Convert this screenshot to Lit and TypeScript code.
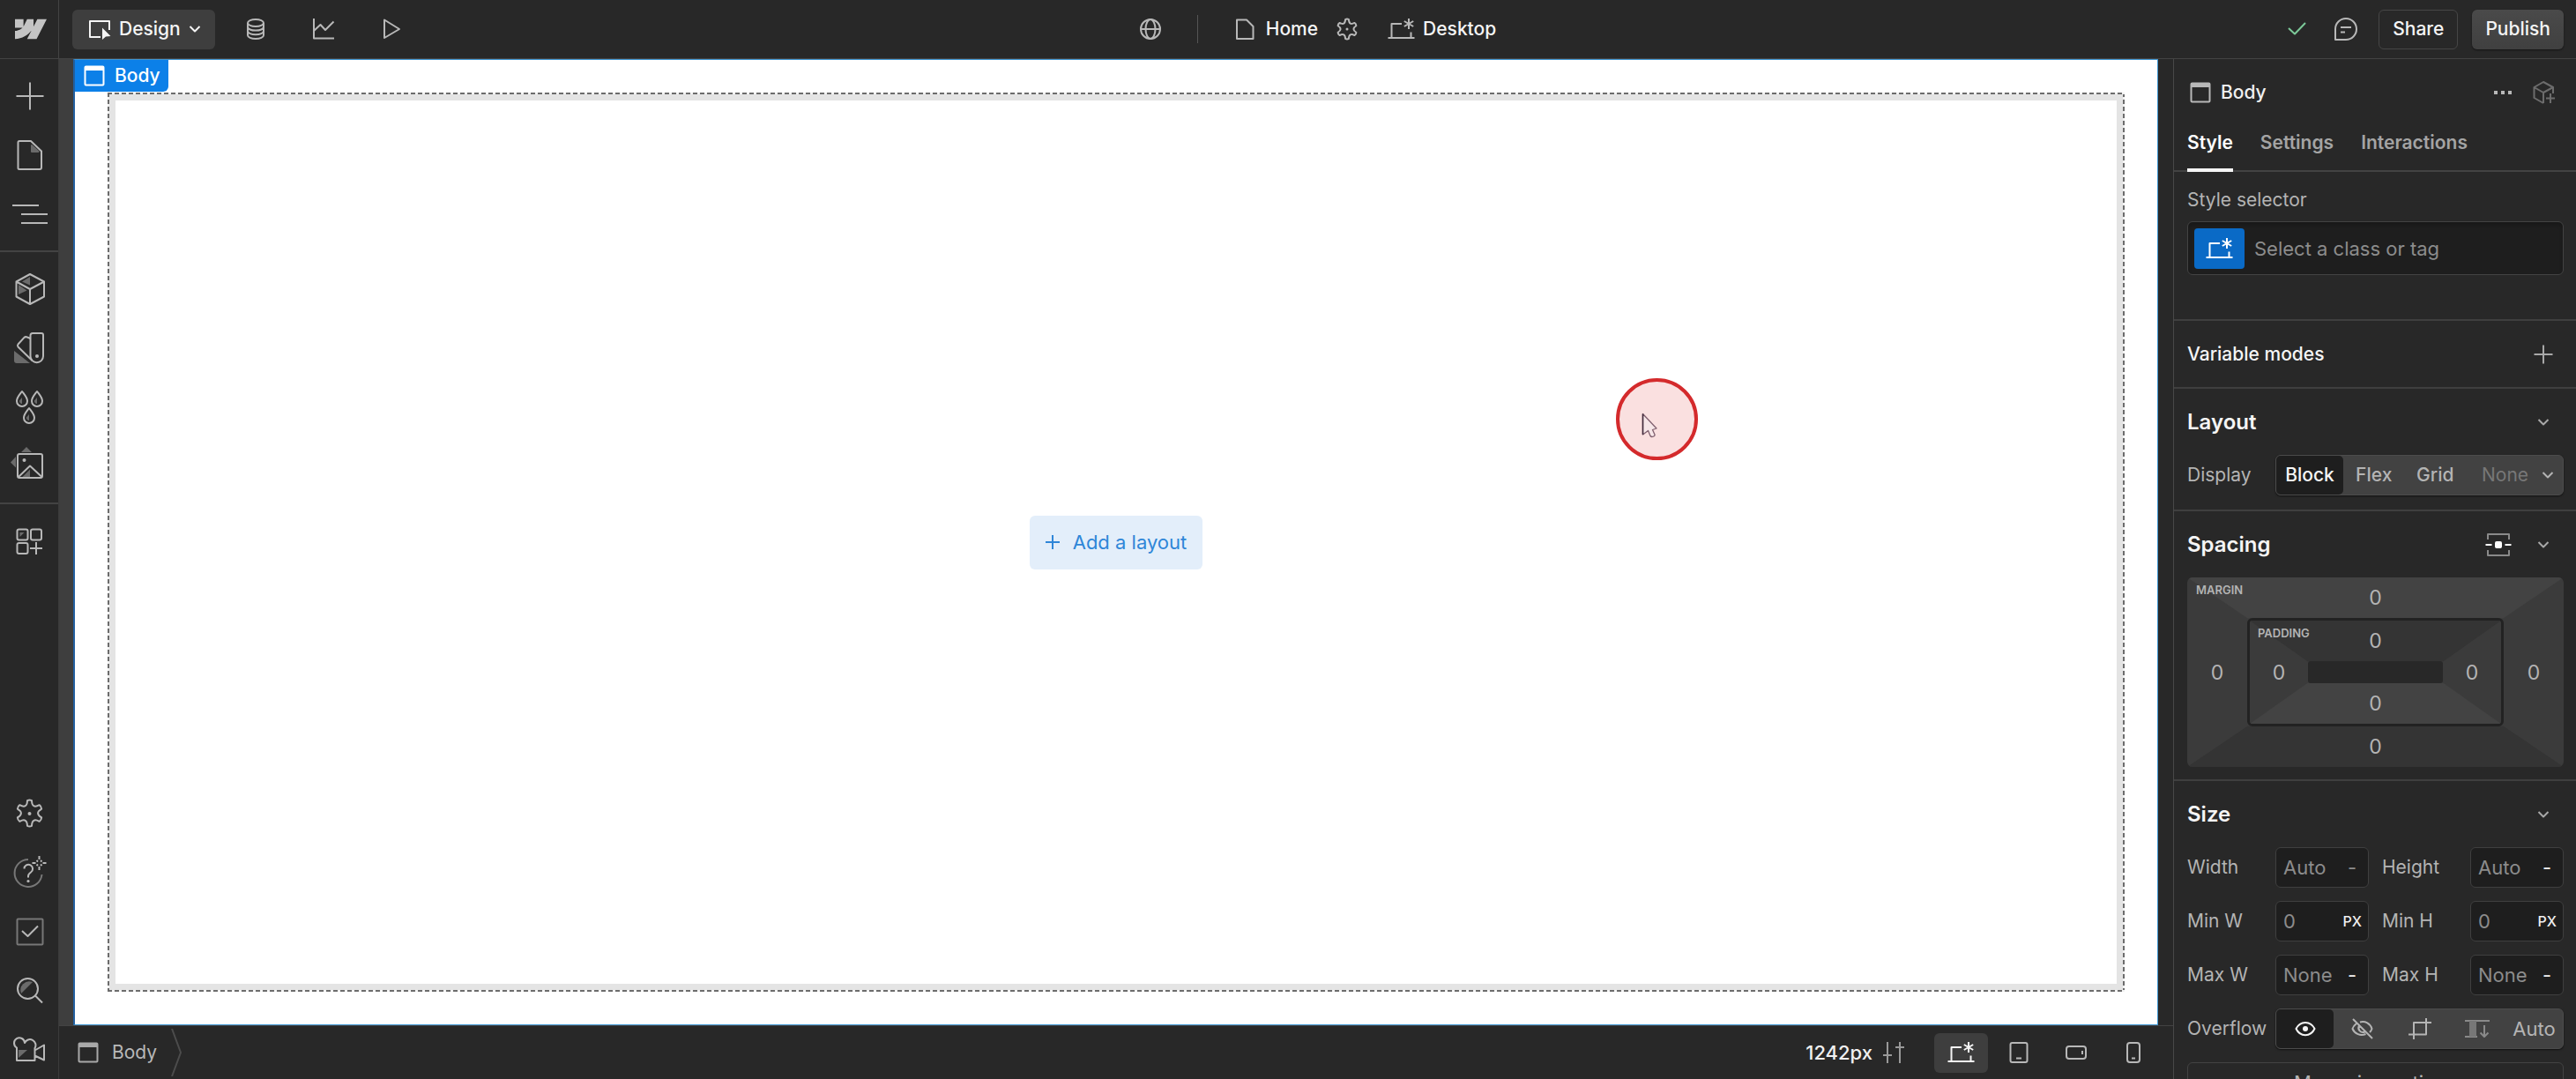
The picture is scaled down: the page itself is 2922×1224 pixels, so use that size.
import { LitElement, html, css, svg } from "lit";
import type { SVGTemplateResult } from "lit";
import { customElement, state } from "lit/decorators.js";
import { classMap } from "lit/directives/class-map.js";

/** Six-armed cog outline centred on (c, c). */
const cog = (c: number, outer: number, control: number): string => {
  const at = (r: number, deg: number) => {
    const a = (deg * Math.PI) / 180;
    return `${(c + r * Math.cos(a)).toFixed(2)} ${(c + r * Math.sin(a)).toFixed(2)}`;
  };
  let d = `M${at(outer, -100)}`;
  for (let k = 0; k < 6; k++) {
    const arm = -90 + k * 60;
    d += `Q${at(outer + 1, arm)} ${at(outer, arm + 10)}Q${at(control, arm + 30)} ${at(outer, arm + 50)}`;
  }
  return d + "Z";
};

const icon = (w: number, h: number, body: SVGTemplateResult, sw = 2) => html`<svg
  class="icon" width=${w} height=${h} viewBox="0 0 ${w} ${h}" fill="none" stroke="currentColor"
  stroke-width=${sw} stroke-linejoin="round" aria-hidden="true">${body}</svg>`;

const drop = (x: number, y: number) => svg`
  <path d="M${x} ${y - 8}C${x + 3} ${y - 4} ${x + 6} ${y - 1} ${x + 6} ${y + 3}a6 6 0 0 1-12 0C${x - 6} ${y - 1} ${x - 3} ${y - 4} ${x} ${y - 8}Z"/>
  <path d="M${x} ${y - 1}v7a3 3 0 0 1-3-3.5z" fill="#6b6b6b" stroke="none"/>`;

const icons = {
  logo: () => icon(36, 36, svg`<path transform="scale(1.5)" fill="currentColor" stroke="none" d="m24 4.515-7.658 14.97H9.149l3.205-6.204h-.144C9.566 16.713 5.621 18.973 0 19.485v-6.118s3.596-.213 5.71-2.435H0V4.515h6.417v5.278l.144-.001 2.622-5.277h4.854v5.244h.144l2.72-5.244H24Z"/>`),
  pointer: () => icon(26, 24, svg`<path d="M14 21H2V3h22v10"/><path d="M16 10.5l9.5 9.5-5.500.6L16 24z" fill="currentColor" stroke="none"/>`),
  chevron: () => icon(14, 10, svg`<path d="M1.5 2l5.5 5.500L12.5 2"/>`),
  database: () => icon(22, 26, svg`<ellipse cx="11" cy="6" rx="9" ry="4"/><path d="M2 6v14c0 2.300 4 4 9 4s9-1.700 9-4V6M2 10.600c0 2.300 4 4 9 4s9-1.700 9-4M2 15.300c0 2.300 4 4 9 4s9-1.700 9-4"/>`),
  chart: () => icon(26, 26, svg`<path d="M2 1v22.500h23M2 15l7.500-7L15 14 24.500 4.500"/>`),
  play: () => icon(22, 26, svg`<path d="M3 2.500v20.500L20 13z"/>`),
  globe: () => icon(26, 26, svg`<circle cx="13" cy="13" r="11"/><ellipse cx="13" cy="13" rx="5.5" ry="11"/><path d="M2 13h22"/>`),
  page: () => icon(22, 26, svg`<path d="M2 2.500h11l7.500 7.500v14H2z"/>`),
  cogSmall: () => icon(26, 26, svg`<path d=${cog(13, 11, 4.5)}/><circle cx="13" cy="13" r="1.5" fill="currentColor" stroke="none"/>`),
  desktop: () => icon(32, 26, svg`<path d="M0.500 23h30M4.500 23V7h11.500M26.500 16.500V22.500"/><path d="M24 1v12M18.800 4l10.400 6M29.200 4l-10.400 6"/>`),
  check: () => icon(24, 18, svg`<path d="M2 8l7 6.500L21 2"/>`),
  comment: () => icon(28, 28, svg`<path d="M2 26V14a12 12 0 1 1 12 12z"/><path d="M8 12h12M8 17.500h5"/>`),
  plus: () => icon(34, 34, svg`<path d="M17 1.500v31M1.500 17h31"/>`),
  plusSmall: () => icon(22, 22, svg`<path d="M11 0.500v21M0.500 11h21"/>`),
  plusTiny: () => icon(16, 16, svg`<path d="M8 0v16M0 8h16"/>`),
  pageLarge: () => icon(30, 36, svg`<path d="M3 2h13L28 13.500V32a2 2 0 0 1-2 2H3a1.500 1.500 0 0 1-1.500-1.500v-29A1.500 1.500 0 0 1 3 2Z"/><path d="M17 7v7h7.500z" fill="#6b6b6b" stroke="#6b6b6b"/>`),
  navigator: () => icon(42, 26, svg`<path d="M1 3h30M11 13h30M11 23h30"/>`),
  cube: () => icon(34, 38, svg`<path d="M8 10.500l9-5.500v9.500zM4 14l9.500 6.500L4 25z" fill="#6b6b6b" stroke="none"/><path d="M17 2l16 8.500v17L17 36 1.500 27.500v-17zM1.500 10.500L17 19l16-8.500M17 19v17"/>`),
  swatches: () => icon(36, 38, svg`<path d="M0 22v11a3 3 0 0 0 3 3h15z" fill="#6b6b6b" stroke="none"/><path d="M21 2h10a2 2 0 0 1 2 2v24a7.200 7.200 0 0 1-14.500 0V4.500A2.500 2.500 0 0 1 21 2Z"/><path d="M18.500 8l-3.500-1.500c-1.500-.7-2.800-.4-3.800.7L4.500 14.500c-.8 1-.8 2 0 3L20.500 33"/><circle cx="26" cy="28" r="2" fill="currentColor" stroke="none"/>`),
  drops: () => icon(34, 40, svg`${drop(8, 10)}${drop(25, 10)}${drop(16, 29)}`),
  image: () => icon(44, 44, svg`<path d="M12 6l6-6 6 6zM6 11L0 17.500l6 6z" fill="#6b6b6b" stroke="none"/><path d="M14 33.500l8-8v9h-9z" fill="#6b6b6b" stroke="none"/><rect x="8" y="8" width="28" height="27" rx="2"/><path d="M9 34L22 21.500 35.500 34"/><circle cx="15.500" cy="15" r="2" fill="currentColor" stroke="none"/>`),
  apps: () => icon(32, 30, svg`<rect x="1.500" y="1.500" width="12" height="12" rx="2"/><rect x="17" y="1.500" width="12" height="12" rx="2"/><rect x="1.500" y="17" width="12" height="12" rx="2"/><path d="M23 16v14M16 23h14"/><path d="M4.500 5h5l-5 5z" fill="#6b6b6b" stroke="none"/>`),
  cog: () => icon(34, 34, svg`<path d=${cog(16.5, 14.5, 5.5)}/><circle cx="16.5" cy="17" r="2" fill="currentColor" stroke="none"/>`),
  help: () => icon(38, 40, svg`<path d="M17 5a15.500 15.500 0 1 0 15.500 17" stroke="#777"/><path d="M12.500 15.500a4.800 4.800 0 1 1 7.500 4c-2 1.300-3 2.300-3 4.500v1.500"/><circle cx="17" cy="29.500" r="1.600" fill="currentColor" stroke="none"/><path d="M29.500 1v4M29.500 13v4M21.500 9h4M33.500 9h4M26.500 6l1.500 1.500M32.500 6L31 7.500M26.500 12l1.500-1.500M32.500 12L31 10.500"/>`),
  audit: () => icon(32, 32, svg`<rect x="1.500" y="1.500" width="29" height="29" rx="1" stroke="#777"/><path d="M7 15l6.500 6L25 9.500"/>`),
  search: () => icon(32, 32, svg`<path d="M6 19a10 10 0 0 1 13-13z" fill="#6b6b6b" stroke="none"/><circle cx="13.500" cy="13.500" r="11.500"/><path d="M22 21.500l8 8"/>`),
  camera: () => icon(38, 30, svg`<path d="M6 15h10l-10 9z" fill="#6b6b6b" stroke="none"/><path d="M4 27V12.500A6 6 0 1 1 13 7a6.500 6.500 0 1 1 11.500 6v2.500l10.500-6v17l-10.500-5V27zM24.500 15.500V22"/>`),
  body: () => icon(24, 24, svg`<rect x="1.500" y="1.500" width="21" height="21" rx="1"/><path d="M1 1h22v5H1z" fill="currentColor" stroke="none"/>`),
  dots: () => icon(22, 6, svg`<path d="M1 1h4v4H1zM9 1h4v4H9zM17 1h4v4h-4z" fill="currentColor" stroke="none"/>`),
  component: () => icon(28, 28, svg`<path d="M13 26L2.500 20V8L13 2l11 6v7M2.500 8L13 14l11-6M13 14v12M21 15v11M16 20.500h10"/>`),
  spacing: () => icon(30, 28, svg`<path d="M3 8V2h24v6M3 20v6h24v-6" stroke="#8a8a8a"/><path d="M0.500 14h7M22.500 14h7"/><rect x="11" y="10" width="8" height="8" rx="2" fill="currentColor" stroke="none"/>`),
  eye: () => icon(24, 18, svg`<path d="M1.500 9C6-.5 18-.5 22.500 9 18 18.500 6 18.500 1.500 9Z"/><circle cx="12" cy="9" r="3" fill="currentColor" stroke="none"/>`),
  eyeOff: () => icon(26, 26, svg`<path d="M2 2l22 22M6 7C3.500 9 2 11 1.500 13c2.500 6 9 8.500 15 6M10 5.500c6-1.500 11.500 1.500 13.500 7.500-.5 1.500-1.500 3-2.500 4M9 9.500a5 5 0 0 0 6.500 7"/>`),
  crop: () => icon(28, 26, svg`<path d="M7 25V6h20M1 19.500h20V1"/>`),
  scroll: () => icon(30, 24, svg`<g stroke="#8a8a8a"><path d="M1 3h28M1 21h14"/><path d="M6 3h8v18H6z" fill="#777" stroke="none"/><path d="M23 8v13M18.500 16.500L23 21l4.500-4.500"/></g>`),
  sliders: () => icon(26, 26, svg`<path d="M6 1v15M6 17v8M1 16h10M20 7v18M20 1v6M15 7h10"/>`),
  tablet: () => icon(22, 26, svg`<rect x="1.500" y="2" width="19" height="22" rx="2"/><path d="M8 19.500h6"/>`),
  landscape: () => icon(26, 18, svg`<rect x="2" y="2" width="22" height="14" rx="3"/><path d="M20 7v4"/>`),
  phone: () => icon(18, 26, svg`<rect x="2" y="2" width="14" height="22" rx="3"/><path d="M7 19.500h4"/>`),
};

type IconName = keyof typeof icons;

const shared = css`
  :host, *, *::before, *::after { box-sizing: border-box; }
  button, input, select {
    font: inherit; color: inherit; background: none; border: 0; padding: 0; margin: 0; min-width: 0;
    appearance: none; outline: none;
  }
  button { display: inline-flex; align-items: center; justify-content: center; cursor: pointer; }
  .icon { display: block; flex: none; }
`;

@customElement("side-rail")
export class SideRail extends LitElement {
  static styles = [shared, css`
    :host { display: flex; flex-direction: column; color: #b8b8b8; background: #282828; border-right: 1px solid #3b3b3b; min-height: 0; }
    .group { display: flex; flex-direction: column; padding: 8px 0; border-bottom: 2px solid #434343; }
    .group.last { border-bottom: 0; }
    .bottom { margin-top: auto; padding: 0; border-bottom: 0; }
    .tool { height: 67px; padding-left: 2px; }
  `];

  private groups: [IconName, string][][] = [
    [["plus", "Add"], ["pageLarge", "Pages"], ["navigator", "Navigator"]],
    [["cube", "Components"], ["swatches", "Variables"], ["drops", "Style selectors"], ["image", "Assets"]],
    [["apps", "Apps"]],
  ];

  private bottom: [IconName, string][] = [
    ["cog", "Settings"], ["help", "Help"], ["audit", "Audit"], ["search", "Search"], ["camera", "Video tutorials"],
  ];

  private tool([name, label]: [IconName, string]) {
    return html`<button class="tool" aria-label=${label}>${icons[name]()}</button>`;
  }

  render() {
    return html`
      ${this.groups.map((g, i) => html`<div class=${classMap({ group: true, last: i === 2 })}>${g.map((t) => this.tool(t))}</div>`)}
      <div class="group bottom">${this.bottom.map((t) => this.tool(t))}</div>
    `;
  }
}

@customElement("top-bar")
export class TopBar extends LitElement {
  static styles = [shared, css`
    :host {
      display: grid; grid-template-columns: 67px 1fr auto 1fr; align-items: center; height: 67px; padding-bottom: 2px;
      background: #282828; border-bottom: 1px solid #434343; color: #b8b8b8; font-weight: 500;
    }
    .logo { height: 66px; display: flex; align-items: center; justify-content: center; padding-left: 4px; border-right: 1px solid #434343; color: #c4c4c4; }
    .left { display: flex; align-items: center; padding-left: 15px; }
    .mode { height: 45px; padding: 0 16px 0 18px; gap: 9px; background: #3e3e3e; color: #f5f5f5; border-radius: 6px; margin-right: 8px; }
    .tool { width: 77px; height: 45px; }
    .center { display: flex; align-items: center; color: #b8b8b8; }
    .divider { width: 1px; height: 32px; background: #555; margin: 0 42px 0 40px; }
    .item { gap: 13px; color: #f5f5f5; }
    .item .icon { color: #b8b8b8; }
    .cog { margin: 0 33px 0 20px; }
    .item.desktop { gap: 8px; }
    .right { display: flex; align-items: center; justify-content: flex-end; padding-right: 14px; }
    .saved { color: #7cc999; margin-right: 29px; display: flex; }
    .comment { margin-right: 23px; }
    .action { height: 45px; padding: 0 15px; border-radius: 6px; color: #f5f5f5; }
    .share { border: 1px solid #464646; margin-right: 16px; }
    .publish { background: linear-gradient(#4a4a4a, #404040); box-shadow: 0 1px 2px #0008; }
  `];

  render() {
    return html`
      <a class="logo" href="#" aria-label="Dashboard">${icons.logo()}</a>
      <div class="left">
        <button class="mode">${icons.pointer()}<span>Design</span>${icons.chevron()}</button>
        <button class="tool" aria-label="CMS">${icons.database()}</button>
        <button class="tool" aria-label="Insights">${icons.chart()}</button>
        <button class="tool" aria-label="Preview">${icons.play()}</button>
      </div>
      <div class="center">
        <button aria-label="Locale">${icons.globe()}</button>
        <span class="divider"></span>
        <button class="item">${icons.page()}<span>Home</span></button>
        <button class="cog" aria-label="Page settings">${icons.cogSmall()}</button>
        <button class="item desktop">${icons.desktop()}<span>Desktop</span></button>
      </div>
      <div class="right">
        <span class="saved">${icons.check()}</span>
        <button class="comment" aria-label="Comments">${icons.comment()}</button>
        <button class="action share">Share</button>
        <button class="action publish">Publish</button>
      </div>
    `;
  }
}

@customElement("design-canvas")
export class DesignCanvas extends LitElement {
  static styles = [shared, css`
    :host { display: flex; background: #282828; border-left: 16px solid #3e3e3e; padding-right: 17px; min-width: 0; min-height: 0; }
    .page {
      position: relative; flex: 1; display: flex; padding: 37px; background: #fff;
      border: 1px solid #3f96d2; border-left: 2px solid #225f9f;
    }
    .tag {
      position: absolute; left: 0; top: 0; display: flex; align-items: center; gap: 11px; height: 36px; padding: 0 9px 0 10px;
      background: #0c80e8; color: #fff; border-bottom-right-radius: 6px; font-weight: 500;
    }
    .drop {
      --across: repeating-linear-gradient(90deg, #6c6c6c 0 5px, #f2f2f2 5px 8px);
      --down: repeating-linear-gradient(#6c6c6c 0 5px, #f2f2f2 5px 8px);
      flex: 1; display: flex; padding: 9px;
      background:
        var(--across) top / 100% 2px no-repeat, var(--across) bottom / 100% 2px no-repeat,
        var(--down) left / 2px 100% no-repeat, var(--down) right / 2px 100% no-repeat, #e4e4e4;
    }
    .inner { flex: 1; display: flex; align-items: center; justify-content: center; background: #fff; }
    .add { height: 61px; padding: 0 18px; gap: 15px; background: #e3eefa; color: #2f86d8; border-radius: 6px; font-size: 22px; }
    .click {
      position: absolute; left: 1748px; top: 361px; width: 93px; height: 93px; border-radius: 50%;
      border: 4px solid #d42a2c; background: #fae0e0; display: flex; padding: 35px 0 0 25px;
    }
  `];

  render() {
    return html`
      <main class="page">
        <div class="drop">
          <div class="inner">
            <button class="add">${icons.plusTiny()}<span>Add a layout</span></button>
          </div>
        </div>
        <div class="tag">${icons.body()}<span>Body</span></div>
        <div class="click">
          <svg width="20" height="30" viewBox="0 0 20 30" fill="#f6e6e8" stroke="#80606f" stroke-width="1.3" stroke-linejoin="round" aria-hidden="true">
            <path d="M1.500 1.500v23.500l6-4.500 2.500 6c1.500 2 5.500.5 5-1.500l-2.500-5.500 4.500-1.500z"/>
            <path d="M1.500 1.500v23.500" stroke="#3f2a3a" stroke-width="1.5"/>
          </svg>
        </div>
      </main>
    `;
  }
}

@customElement("bottom-bar")
export class BottomBar extends LitElement {
  static styles = [shared, css`
    :host {
      display: flex; align-items: center; justify-content: space-between; height: 61px; padding: 0 13px 0 21px;
      background: #282828; border-top: 1px solid #434343; color: #b8b8b8;
    }
    .crumb { display: flex; align-items: center; height: 100%; }
    .crumb button { gap: 15px; margin-right: 15px; }
    .crumb .icon { color: #a8a8a8; }
    .crumb .arrow { color: #4c4c4c; }
    .sizes { display: flex; align-items: center; }
    .width { color: #f0f0f0; gap: 11px; margin-right: 33px; font-size: 22px; font-weight: 500; }
    .width .icon { color: #999; }
    .device { width: 65px; height: 45px; border-radius: 6px; }
    .device.on { width: 61px; margin-right: 2px; background: #3e3e3e; color: #f5f5f5; }
  `];

  @state() private device = "Desktop";

  private devices: [IconName, string][] = [
    ["desktop", "Desktop"], ["tablet", "Tablet"], ["landscape", "Mobile landscape"], ["phone", "Mobile portrait"],
  ];

  render() {
    return html`
      <nav class="crumb" aria-label="Element path">
        <button>${icons.body()}<span>Body</span></button>
        <svg class="icon arrow" width="14" height="54" viewBox="0 0 14 54" fill="none" stroke="currentColor" stroke-width="2" aria-hidden="true"><path d="M2 0l10 27L2 54"/></svg>
      </nav>
      <div class="sizes">
        <button class="width"><span>1242px</span>${icons.sliders()}</button>
        ${this.devices.map(([name, label]) => html`
          <button class=${classMap({ device: true, on: label === this.device })} aria-label=${label}
            @click=${() => (this.device = label)}>${icons[name]()}</button>`)}
      </div>
    `;
  }
}

@customElement("spacing-box")
export class SpacingBox extends LitElement {
  static styles = [shared, css`
    :host { display: block; color: #b4b4b4; font-size: 23px; }
    .margin, .padding { display: grid; position: relative; overflow: hidden; }
    .margin { grid-template: 46px 123px 46px / 68px 1fr 68px; border-radius: 6px; }
    .padding { grid-template: 1fr 25px 1fr / 66px 1fr 66px; border: 3px solid #222; border-radius: 6px; grid-area: 2 / 2; }
    .faces { grid-area: 1 / 1 / -1 / -1; width: 100%; height: 100%; }
    .core { grid-area: 2 / 2; background: #282828; border-radius: 3px; }
    .name { position: absolute; font-size: 13px; line-height: 16px; font-weight: 600; }
    .margin > .name { left: 10px; top: 6px; }
    .padding > .name { left: 9px; top: 6px; }
    .top { grid-area: 1 / 2; }
    .right { grid-area: 2 / 3; }
    .bottom { grid-area: 3 / 2; }
    .left { grid-area: 2 / 1; }
  `];

  private faces(top: string, bottom: string, x: number, y: number) {
    return html`<svg class="faces" viewBox="0 0 100 100" preserveAspectRatio="none" aria-hidden="true">
      <rect width="100" height="100" fill="#3b3b3b"/>
      <path d="M0 0H100L${100 - x} ${y}H${x}Z" fill=${top}/>
      <path d="M0 100H100L${100 - x} ${100 - y}H${x}Z" fill=${bottom}/>
    </svg>`;
  }

  private values(kind: string) {
    return ["top", "right", "bottom", "left"].map((s) => html`<button class=${s} aria-label="${kind} ${s}">0</button>`);
  }

  render() {
    return html`
      <div class="margin">
        ${this.faces("#434343", "#343434", 16, 21.5)}
        <span class="name">MARGIN</span>
        ${this.values("Margin")}
        <div class="padding">
          ${this.faces("#343434", "#434343", 23, 39.5)}
          <span class="name">PADDING</span>
          ${this.values("Padding")}
          <div class="core"></div>
        </div>
      </div>
    `;
  }
}

@customElement("style-panel")
export class StylePanel extends LitElement {
  static styles = [shared, css`
    :host { display: block; background: #282828; border-left: 1px solid #484848; color: #b4b4b4; min-height: 0; overflow: hidden; }
    .head, .title { display: flex; align-items: center; }
    .head { height: 76px; padding: 0 22px 0 18px; color: #f0f0f0; font-weight: 500; }
    .head .icon { color: #b8b8b8; }
    .head span { margin-left: 11px; flex: 1; }
    .head .ghost { margin-left: 22px; }
    .head .ghost .icon { color: #6c6c6c; }
    .tabs { display: flex; gap: 31px; height: 52px; padding: 0 15px; border-bottom: 2px solid #434343; font-weight: 600; }
    .tab { align-items: flex-start; padding-top: 5px; height: 52px; border-bottom: 4px solid transparent; color: #a4a4a4; }
    .tab.on { color: #fff; border-color: #f5f5f5; }
    .section { padding: 0 14px 0 15px; border-bottom: 2px solid #3f3f3f; }
    .title { height: 75px; padding-right: 16px; color: #f5f5f5; font-size: 24px; font-weight: 600; gap: 29px; }
    .title h2 { flex: 1; margin: 0; font: inherit; }
    .title.small { font-size: 21px; font-weight: 500; padding-right: 12px; }
    .title .icon { color: #a8a8a8; }
    .title .bright .icon { color: #fff; }
    .selector { padding-top: 16px; padding-bottom: 50px; }
    .selector label { display: block; line-height: 32px; }
    .combo { display: flex; align-items: center; gap: 11px; height: 61px; margin-top: 8px; padding: 0 7px; background: #1e1e1e; border: 1px solid #434343; border-radius: 6px; box-shadow: inset 0 3px 4px #0003; }
    .combo button { width: 57px; height: 46px; background: #0a6ac6; color: #fff; border-radius: 4px; }
    input { font-size: 22px; }
    .combo input { flex: 1; }
    input::placeholder { color: #8c8c8c; opacity: 1; }
    .row { display: grid; grid-template-columns: 100px 1fr; align-items: center; }
    .rows { display: grid; gap: 15px; }
    .pair { display: grid; grid-template-columns: 1fr 1fr; gap: 15px; }
    .segments { display: flex; height: 46px; background: #424242; border: 1px solid #4c4c4c; border-radius: 6px; box-shadow: 0 1px 2px #0009; font-size: 22px; }
    .segment { flex: 1; }
    .segment.on { background: #1e1e1e; color: #f5f5f5; border-radius: 5px; }
    .display { font-size: 21px; }
    .display .segment { font-weight: 500; }
    .display .on { flex: none; width: 76px; }
    .more { display: flex; align-items: center; padding: 0 10px 0 18px; color: #777; }
    .more select { width: 68px; }
    .more .icon { color: #b4b4b4; }
    .field { display: flex; align-items: center; height: 46px; padding: 0 7px 0 8px; background: #1e1e1e; border: 1px solid #3f3f3f; border-radius: 6px; }
    .field input { flex: 1; width: 0; }
    .unit { color: #f0f0f0; font-size: 16px; font-weight: 500; }
    .unit.short { padding-right: 6px; font-size: 22px; font-weight: 400; }
    .unit.dim { color: #8c8c8c; }
    .options { width: 100%; height: 46px; border: 1px solid #434343; border-radius: 6px; font-size: 22px; }
    .layout { padding-bottom: 16px; }
    .spacing { padding-bottom: 14px; }
    .size { border-bottom: 0; }
  `];

  @state() private tab = "Style";
  @state() private display = "Block";
  @state() private overflow = "Visible";

  private sizes: [string, string, string][] = [
    ["Width", "Auto", "-"], ["Height", "Auto", "-"],
    ["Min W", "0", "PX"], ["Min H", "0", "PX"],
    ["Max W", "None", "-"], ["Max H", "None", "-"],
  ];

  private overflows: [string, IconName | null][] = [
    ["Visible", "eye"], ["Hidden", "eyeOff"], ["Clip", "crop"], ["Scroll", "scroll"], ["Auto", null],
  ];

  private field([label, hint, unit]: [string, string, string]) {
    const id = label.toLowerCase().replace(" ", "-");
    return html`<div class="row">
      <label for=${id}>${label}</label>
      <div class="field">
        <input id=${id} placeholder=${hint} />
        <button class=${classMap({ unit: true, short: unit === "-", dim: label === "Width" })} aria-label="${label} unit">${unit}</button>
      </div>
    </div>`;
  }

  private title(text: string, extra: unknown = null) {
    return html`<div class="title"><h2>${text}</h2>${extra}<button aria-label="Toggle ${text}">${icons.chevron()}</button></div>`;
  }

  render() {
    return html`
      <div class="head">
        ${icons.body()}<span>Body</span>
        <button aria-label="More">${icons.dots()}</button>
        <button class="ghost" aria-label="Create component">${icons.component()}</button>
      </div>
      <div class="tabs">
        ${["Style", "Settings", "Interactions"].map((t) => html`
          <button class=${classMap({ tab: true, on: t === this.tab })} @click=${() => (this.tab = t)}>${t}</button>`)}
      </div>
      <section class="section selector">
        <label for="selector">Style selector</label>
        <div class="combo">
          <button aria-label="Breakpoint">${icons.desktop()}</button>
          <input id="selector" placeholder="Select a class or tag" />
        </div>
      </section>
      <section class="section">
        <div class="title small"><h2>Variable modes</h2><button aria-label="Add mode">${icons.plusSmall()}</button></div>
      </section>
      <section class="section layout">
        ${this.title("Layout")}
        <div class="row">
          <span>Display</span>
          <div class="segments display">
            ${["Block", "Flex", "Grid"].map((d) => html`
              <button class=${classMap({ segment: true, on: d === this.display })} @click=${() => (this.display = d)}>${d}</button>`)}
            <div class="more"><select aria-label="More display values"><option>None</option></select>${icons.chevron()}</div>
          </div>
        </div>
      </section>
      <section class="section spacing">
        ${this.title("Spacing", html`<button class="bright" aria-label="Centre">${icons.spacing()}</button>`)}
        <spacing-box></spacing-box>
      </section>
      <section class="section size">
        ${this.title("Size")}
        <div class="rows">
          ${[0, 2, 4].map((i) => html`<div class="pair">${this.field(this.sizes[i])}${this.field(this.sizes[i + 1])}</div>`)}
          <div class="row">
            <span>Overflow</span>
            <div class="segments">
              ${this.overflows.map(([label, name]) => html`
                <button class=${classMap({ segment: true, on: label === this.overflow })} aria-label=${label}
                  @click=${() => (this.overflow = label)}>${name ? icons[name]() : label}</button>`)}
            </div>
          </div>
          <button class="options">More size options</button>
        </div>
      </section>
    `;
  }
}

@customElement("app-root")
export class AppRoot extends LitElement {
  static styles = css`
    :host {
      display: grid; height: 100vh; overflow: hidden; background: #282828;
      grid-template: auto minmax(0, 1fr) auto / 67px minmax(0, 1fr) 457px;
      font: 400 21px/28px Inter, "Liberation Sans", sans-serif;
    }
    top-bar { grid-area: 1 / 1 / 2 / -1; }
    side-rail { grid-area: 2 / 1 / -1 / 2; }
    design-canvas { grid-area: 2 / 2; }
    bottom-bar { grid-area: 3 / 2; }
    style-panel { grid-area: 2 / 3 / -1 / 4; }
  `;

  render() {
    return html`
      <top-bar></top-bar>
      <side-rail></side-rail>
      <design-canvas></design-canvas>
      <bottom-bar></bottom-bar>
      <style-panel></style-panel>
    `;
  }
}
